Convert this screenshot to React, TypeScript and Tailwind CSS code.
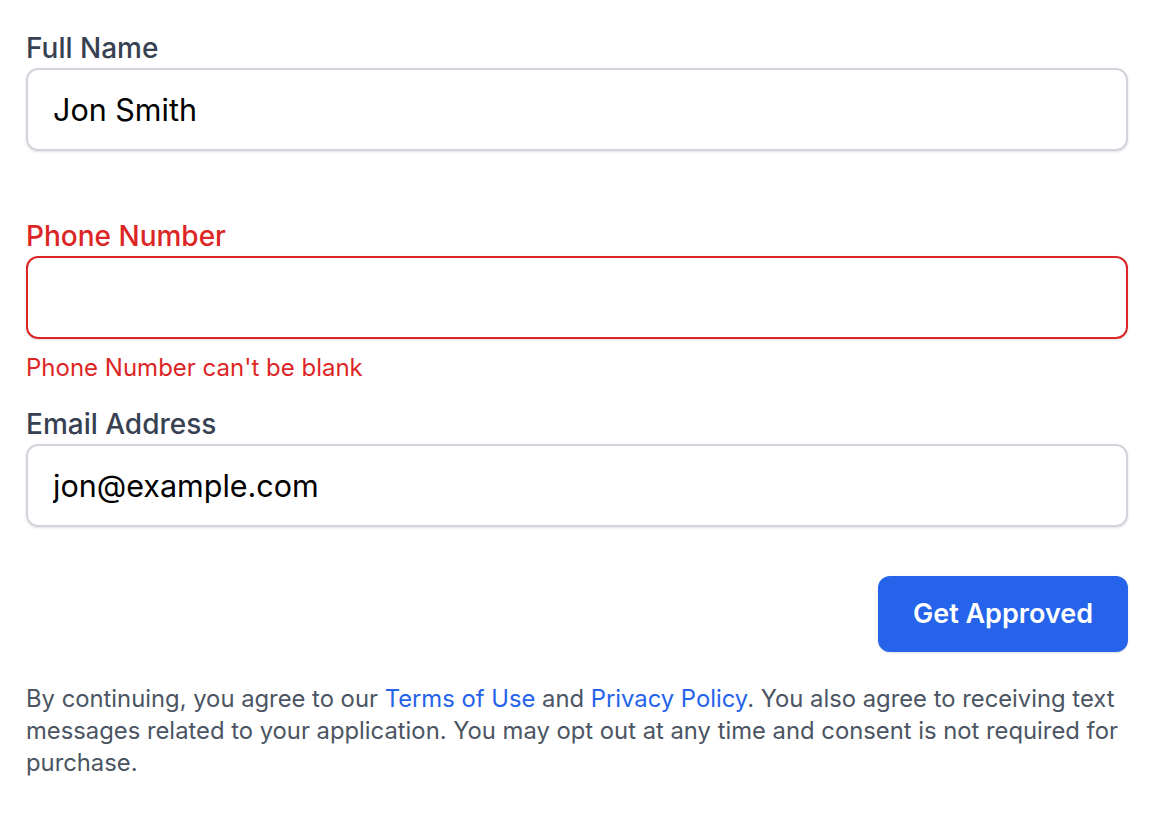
export default function App() {
    return (
        <div className="min-h-screen bg-white pl-[26px] pr-[24px] pt-[28px] font-['Inter',sans-serif]">
            <div className="flex flex-col">
                <label className="text-[28px] leading-[40px] font-medium text-[#374151]">Full Name</label>
                <input
                    defaultValue="Jon Smith"
                    className="h-[83px] w-full rounded-[12px] border-2 border-[#d1d5db] px-[25px] text-[30.5px] text-black shadow-sm outline-none"
                />
                <div className="h-[65px]" />

                <label className="text-[28px] leading-[40px] font-medium text-[#dc2626]">Phone Number</label>
                <input className="h-[83px] w-full rounded-[12px] border-2 border-[#dc2626] px-[25px] text-[30.5px] text-black shadow-sm outline-none" />
                <p className="mt-[13px] text-[24px] leading-[32px] text-[#dc2626]">Phone Number can't be blank</p>
                <div className="h-[20px]" />

                <label className="text-[28px] leading-[40px] font-medium text-[#374151]">Email Address</label>
                <input
                    defaultValue="jon@example.com"
                    className="h-[83px] w-full rounded-[12px] border-2 border-[#d1d5db] px-[25px] text-[30.5px] text-black shadow-sm outline-none"
                />

                <div className="mt-[49px] flex justify-end">
                    <button className="h-[76px] w-[250px] rounded-[12px] bg-[#2563eb] text-[27px] font-semibold text-white shadow-sm">
                        Get Approved
                    </button>
                </div>

                <p className="mt-[31px] text-[23.8px] leading-[32px] text-[#4b5563]">
                    By continuing, you agree to our <a className="text-[#2563eb]">Terms of Use</a> and{' '}
                    <a className="text-[#2563eb]">Privacy Policy</a>. You also agree to receiving text messages related to
                    your application. You may opt out at any time and consent is not required for purchase.
                </p>
            </div>
        </div>
    )
}
